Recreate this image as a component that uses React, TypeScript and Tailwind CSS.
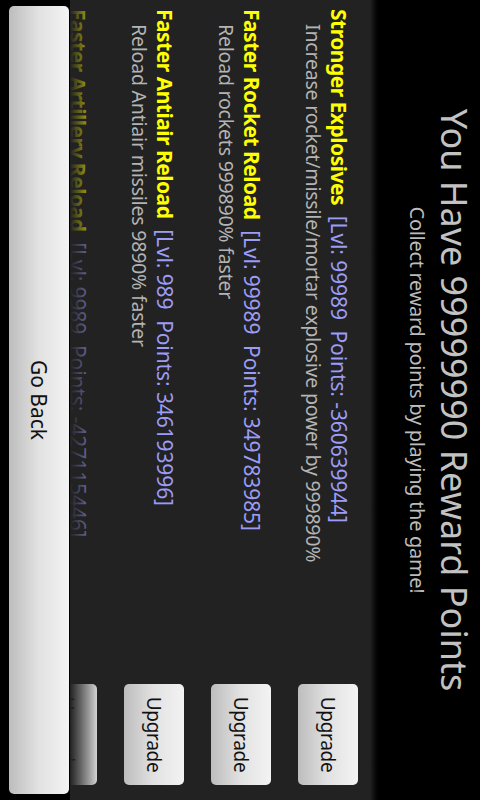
import React from 'react';

type Upgrade = {
  name: string;
  level: number;
  points: number;
  description: string;
};

const upgrades: Upgrade[] = [
  {
    name: 'Stronger Explosives',
    level: 99989,
    points: -360639944,
    description: 'Increase rocket/missile/mortar explosive power by 999890%',
  },
  {
    name: 'Faster Rocket Reload',
    level: 99989,
    points: 349783985,
    description: 'Reload rockets 999890% faster',
  },
  {
    name: 'Faster Antiair Reload',
    level: 989,
    points: 346193996,
    description: 'Reload Antiair missiles 9890% faster',
  },
  {
    name: 'Faster Artillery Reload',
    level: 9989,
    points: -427115446,
    description: 'Reload artillery 99890% faster',
  },
];

const buttonClass =
  'rounded-[5px] bg-gradient-to-b from-[#f3f3f3] via-[#e2e2e2] to-[#bdbdbd] text-[#111] leading-none flex items-center justify-center';

function UpgradeRow({ item }: { item: Upgrade }) {
  return (
    <div className="h-[87px] shrink-0 flex items-start">
      <div className="flex-1 pl-[9px] pt-[11px] leading-[25px]">
        <div className="whitespace-pre text-[21px]">
          <span className="font-bold tracking-[-0.5px] text-[#ffff00]">{item.name}</span>
          <span className="tracking-[-0.1px] text-[#9c9cf6]">{`  [Lvl: ${item.level}  Points: ${item.points}]`}</span>
        </div>
        <div className="pl-[15px] text-[19.5px] tracking-[-0.2px] text-[#b4b4b4]">{item.description}</div>
      </div>
      <button className={`${buttonClass} mt-[4px] mr-[15px] h-[60px] w-[101px] text-[19px] tracking-[-0.3px]`}>
        Upgrade
      </button>
    </div>
  );
}

export default function App() {
  return (
    <div className="w-[480px] h-[800px] overflow-hidden bg-black">
      {/* landscape screen turned onto the portrait window */}
      <div
        className="w-[800px] h-[480px] origin-top-left rotate-90 translate-x-[480px] bg-black flex flex-col"
        style={{ fontFamily: '"Noto Sans", "Open Sans", sans-serif' }}
      >
        <div className="h-[98px] shrink-0 flex flex-col items-center pt-[6px]">
          <h1 className="text-[36px] leading-[40px] text-[#c2c2c2]">You Have 99999990 Reward Points</h1>
          <p className="mt-[4px] text-[20px] leading-[25px] tracking-[-0.3px] text-[#bcbcbc]">
            Collect reward points by playing the game!
          </p>
        </div>

        <div className="relative h-[312px] shrink-0 flex flex-col bg-[#222] overflow-hidden">
          <div className="h-[12px] shrink-0 bg-gradient-to-b from-black to-[#222]" />
          <div className="pt-[8px] flex flex-col">
            {upgrades.map((u) => (
              <UpgradeRow key={u.name} item={u} />
            ))}
          </div>
          {/* fading edge at the end of the list */}
          <div className="pointer-events-none absolute left-0 right-0 bottom-0 h-[32px] bg-gradient-to-b from-[#222]/0 to-[#222]" />
        </div>

        <div className="flex-1 px-[6px] pt-[1px] pb-[9px] flex">
          <button className={`${buttonClass} flex-1 text-[21px]`}>Go Back</button>
        </div>
      </div>
    </div>
  );
}
